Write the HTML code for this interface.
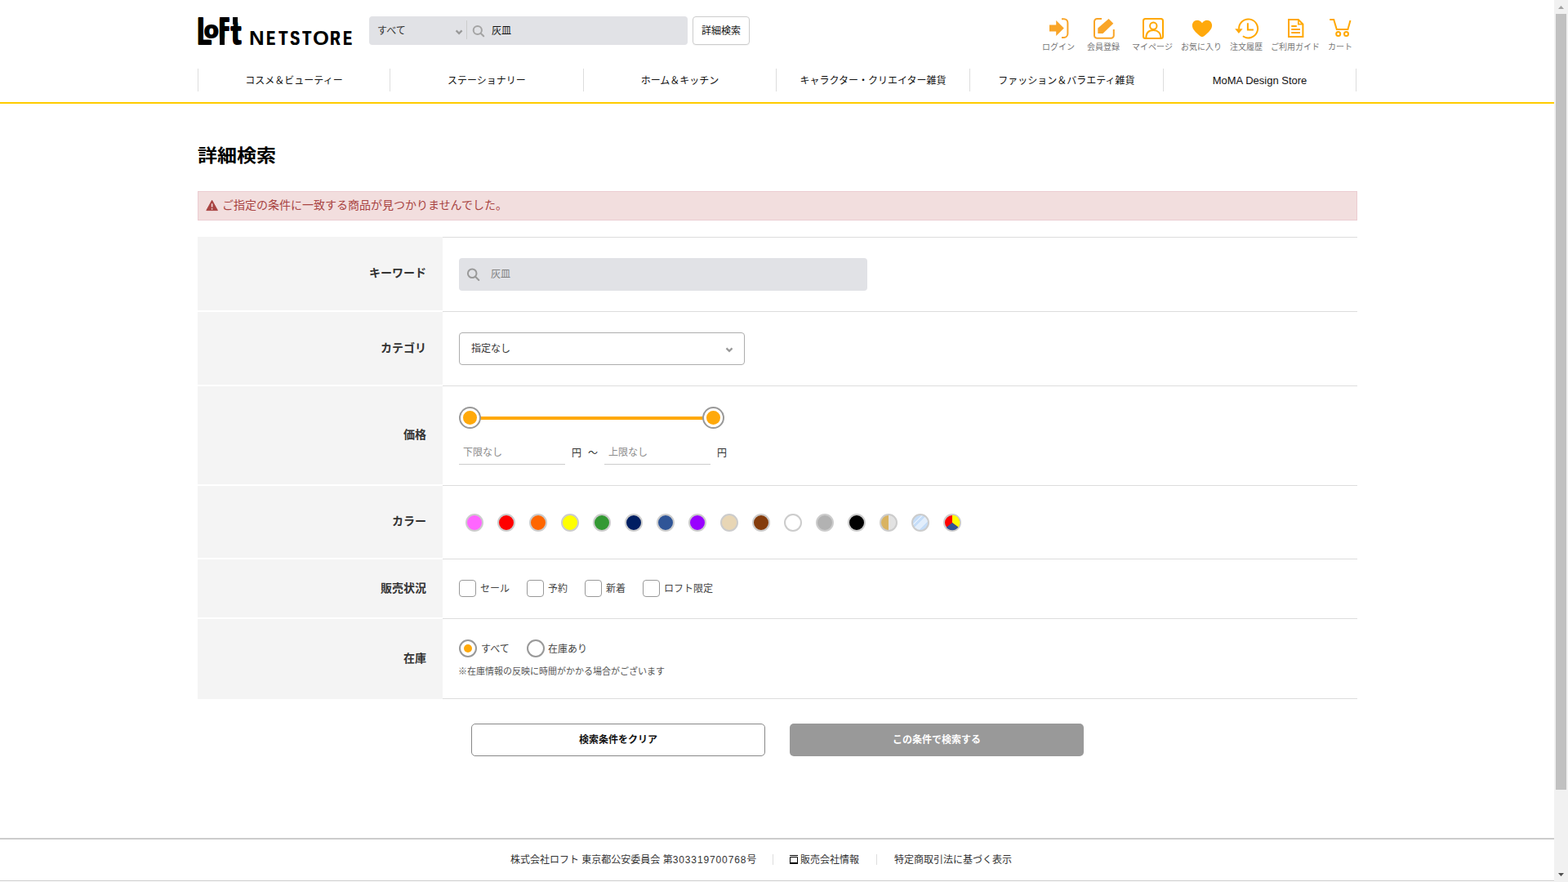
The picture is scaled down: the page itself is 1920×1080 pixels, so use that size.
<!DOCTYPE html>
<html lang="ja">
<head>
<meta charset="utf-8">
<title>詳細検索 | ロフトネットストア</title>
<style>
*{box-sizing:border-box;margin:0;padding:0}
html,body{width:1920px;height:1080px;overflow:hidden;background:#fff}
body{position:relative;font-family:"Liberation Sans","Noto Sans CJK JP",sans-serif;font-size:12px;color:#333;line-height:1}
.a{position:absolute;white-space:nowrap}
svg{position:absolute;overflow:visible}
/* header */
.logo{left:0;top:0;width:440px;height:60px;font-size:0;line-height:0}
.logo i{display:block}
.logo span{display:inline-block;position:relative;width:0;height:0;vertical-align:top;font-weight:bold;color:#000;transform-origin:0 0;line-height:1;white-space:nowrap}
.logo .ns{position:static;display:inline;font-size:0}
.logo .ns span{top:35px;font-size:24.5px}
.sbox{left:452px;top:20px;width:390px;height:35px;background:#e1e2e6;border-radius:4px}
.btn-d{left:848px;top:20px;width:70px;height:35px;border:1px solid #ccc;border-radius:4px;background:#fff;text-align:center;line-height:35px;color:#111;box-shadow:0 1px 1px rgba(0,0,0,.04)}
.ilab{font-size:10px;color:#777;text-align:center;width:80px;top:52px;line-height:11px}
.nd{top:84px;width:1px;height:28px;background:#ddd}
.ni{top:86px;height:28px;text-align:center;line-height:27px;font-size:12px;color:#111}
.yline{left:0;top:125px;width:1903px;height:2px;background:#ffcc00}
/* content */
h1{left:242px;top:177.6px;font-size:24px;font-weight:bold;color:#000;line-height:26px;transform:scaleY(.89);transform-origin:0 50%}
.alert{left:242px;top:234px;width:1420px;height:36px;background:#f2dede;border:1px solid #ebccd1;color:#a94442;font-size:14px;line-height:33px;padding-left:29px}
.th{left:242px;width:300px;background:#f4f4f4;text-align:right;padding-right:20px;font-size:14px;font-weight:bold;color:#333}
.ln{left:542px;width:1120px;height:1px;background:#ddd}
.kw{left:562px;top:316px;width:500px;height:40px;background:#e1e2e6;border-radius:4px;color:#808080;padding-left:39px;line-height:40px}
.sel{left:562px;top:407px;width:350px;height:40px;border:1px solid #adadad;border-radius:4px;background:#fff;padding-left:14px;line-height:38px;color:#333}
.track{left:575px;top:510px;width:298px;height:4px;background:#ffa90a}
.hd{width:27px;height:27px;border-radius:50%;border:2px solid #999;background:#fff;top:498px}
.hd i{position:absolute;left:3px;top:3px;width:17px;height:17px;border-radius:50%;background:#ffa90a}
.pin{top:538px;width:130px;height:31px;border-bottom:1px solid #ccc;color:#8c8c8c;padding-left:5px;line-height:32px}
.col{top:629px;width:22px;height:22px;border-radius:50%;border:2px solid #ccc;overflow:hidden}
.cb{top:710px;width:21px;height:21px;border:1px solid #999;border-radius:4px;background:#fff}
.cl{top:714px;line-height:14px;color:#444}
.rd{top:783px;width:22px;height:22px;border:2px solid #999;border-radius:50%;background:#fff}
.rd i{position:absolute;left:4px;top:4px;width:10px;height:10px;border-radius:50%;background:#ffa90a}
.rl{top:788px;line-height:14px;color:#444}
.note{left:561px;top:815px;font-size:11px;color:#555;line-height:14px}
.b1{left:577px;top:886px;width:360px;height:40px;border:1px solid #888;border-radius:5px;background:#fff;text-align:center;font-weight:bold;color:#111;line-height:39px}
.b2{left:967px;top:886px;width:360px;height:40px;border-radius:5px;background:#999;text-align:center;font-weight:bold;color:#fff;line-height:41px}
/* footer */
.f1{left:0;top:1026px;width:1903px;height:2px;background:#ccc}
.f2{left:0;top:1078px;width:1903px;height:1px;background:#ccc}
.ft{top:1046px;line-height:14px;color:#333}
.fs{top:1046px;width:1px;height:13px;background:#ddd}
/* scrollbar */
.sb{left:1903px;top:0;width:17px;height:1080px;background:#f1f1f1}
.sbt{left:1905px;top:17px;width:13px;height:950px;background:#c1c1c1}
</style>
</head>
<body>
<!-- HEADER -->
<div class="a logo" aria-label="LoFt NETSTORE"><i style="position:absolute;left:285px;top:21px;width:6px;height:9px;background:#000"></i><i style="position:absolute;left:269.2px;top:40px;width:5.8px;height:14.8px;background:#000"></i><span style="left:241.14px;top:13.5px;font-size:48px;transform:scaleX(.569);text-shadow:3.5px 0 0 #000,0 1px 0 #000,3.5px 1px 0 #000">L</span><span style="left:249.7px;top:23.2px;font-size:30px;transform:scale(.961,.93);-webkit-text-stroke:2px #000">o</span><span style="left:268.1px;top:16.3px;font-size:37px;transform:scale(.437,.95);text-shadow:4px 0 0 #000,8px 0 0 #000,0 1.3px 0 #000,4px 1.3px 0 #000,8px 1.3px 0 #000">F</span><span style="left:282.2px;top:19.5px;font-size:50px;transform:scale(.84,.79);text-shadow:0 1.27px 0 #000,0 2.53px 0 #000">t</span> <span class="ns"><span style="left:304.62px;transform:scaleX(1.054);">N</span><span style="left:326.08px;transform:scaleX(0.634);text-shadow:1.74px 0 0 #000;">E</span><span style="left:341.11px;transform:scaleX(0.704);text-shadow:1.56px 0 0 #000;">T</span><span style="left:354.70px;transform:scaleX(0.695);text-shadow:1.58px 0 0 #000;">S</span><span style="left:369.71px;transform:scaleX(0.699);text-shadow:1.57px 0 0 #000;">T</span><span style="left:382.71px;transform:scaleX(1.045);">O</span><span style="left:404.12px;transform:scaleX(0.680);text-shadow:1.62px 0 0 #000;">R</span><span style="left:420.07px;transform:scaleX(0.626);text-shadow:1.76px 0 0 #000;">E</span></span></div>
<div class="a sbox"></div>
<div class="a" style="left:462px;top:31px;line-height:14px;color:#333">すべて</div>
<div class="a" style="left:571px;top:25px;width:1px;height:23px;background:#ccc"></div>
<div class="a" style="left:602px;top:31px;line-height:14px;color:#111">灰皿</div>
<div class="a btn-d">詳細検索</div>

<div class="a ilab" style="left:1256px">ログイン</div>
<div class="a ilab" style="left:1311px">会員登録</div>
<div class="a ilab" style="left:1371px">マイページ</div>
<div class="a ilab" style="left:1431px">お気に入り</div>
<div class="a ilab" style="left:1486px">注文履歴</div>
<div class="a ilab" style="left:1546px">ご利用ガイド</div>
<div class="a ilab" style="left:1601px">カート</div>

<div class="a nd" style="left:242px"></div>
<div class="a nd" style="left:477px"></div>
<div class="a nd" style="left:714px"></div>
<div class="a nd" style="left:950px"></div>
<div class="a nd" style="left:1187px"></div>
<div class="a nd" style="left:1424px"></div>
<div class="a nd" style="left:1660px"></div>
<div class="a ni" style="left:243px;width:234px">コスメ＆ビューティー</div>
<div class="a ni" style="left:478px;width:236px">ステーショナリー</div>
<div class="a ni" style="left:715px;width:235px">ホーム＆キッチン</div>
<div class="a ni" style="left:951px;width:236px">キャラクター・クリエイター雑貨</div>
<div class="a ni" style="left:1188px;width:236px">ファッション＆バラエティ雑貨</div>
<div class="a ni" style="left:1425px;width:235px;font-size:13px;top:85px">MoMA Design Store</div>
<div class="a yline"></div>

<!-- CONTENT -->
<h1 class="a">詳細検索</h1>
<div class="a alert">ご指定の条件に一致する商品が見つかりませんでした。</div>

<div class="a th" style="top:290px;height:90px;line-height:88px">キーワード</div>
<div class="a th" style="top:382px;height:89px;line-height:88px">カテゴリ</div>
<div class="a th" style="top:473px;height:120px;line-height:119px">価格</div>
<div class="a th" style="top:595px;height:88px;line-height:87px">カラー</div>
<div class="a th" style="top:685px;height:71px;line-height:71px">販売状況</div>
<div class="a th" style="top:758px;height:98px;line-height:97px">在庫</div>
<div class="a ln" style="top:290px"></div>
<div class="a ln" style="top:381px"></div>
<div class="a ln" style="top:472px"></div>
<div class="a ln" style="top:594px"></div>
<div class="a ln" style="top:684px"></div>
<div class="a ln" style="top:757px"></div>
<div class="a ln" style="top:855px"></div>

<div class="a kw">灰皿</div>
<div class="a sel">指定なし</div>

<div class="a track"></div>
<div class="a hd" style="left:562px"><i></i></div>
<div class="a hd" style="left:860px"><i></i></div>
<div class="a pin" style="left:562px">下限なし</div>
<div class="a" style="left:700px;top:548px;line-height:14px">円</div>
<div class="a" style="left:720px;top:548px;line-height:14px">～</div>
<div class="a pin" style="left:740px">上限なし</div>
<div class="a" style="left:878px;top:548px;line-height:14px">円</div>

<div class="a col" style="left:570px;background:#ff66ff"></div>
<div class="a col" style="left:609px;background:#ff0000"></div>
<div class="a col" style="left:648px;background:#ff6600"></div>
<div class="a col" style="left:687px;background:#ffff00"></div>
<div class="a col" style="left:726px;background:#339933"></div>
<div class="a col" style="left:765px;background:#001e62"></div>
<div class="a col" style="left:804px;background:#2f5597"></div>
<div class="a col" style="left:843px;background:#9900ff"></div>
<div class="a col" style="left:882px;background:#e8d6b5"></div>
<div class="a col" style="left:921px;background:#843c0c"></div>
<div class="a col" style="left:960px;background:#ffffff"></div>
<div class="a col" style="left:999px;background:#b2b2b2"></div>
<div class="a col" style="left:1038px;background:#000000"></div>
<div class="a col" style="left:1077px;background:linear-gradient(90deg,#d9b361 50%,#e2e2e2 50%)"></div>
<div class="a col" style="left:1116px;background:linear-gradient(135deg,#c5ddf8 30.5%,#e2eefc 30.5%,#e2eefc 34%,#c5ddf8 34%,#c5ddf8 44.5%,#e2eefc 44.5%,#e2eefc 72%,#c5ddf8 72%)"></div>
<div class="a col" style="left:1155px;background:#ff0000"></div>

<div class="a cb" style="left:562px"></div><div class="a cl" style="left:588px">セール</div>
<div class="a cb" style="left:645px"></div><div class="a cl" style="left:671px">予約</div>
<div class="a cb" style="left:716px"></div><div class="a cl" style="left:742px">新着</div>
<div class="a cb" style="left:787px"></div><div class="a cl" style="left:813px">ロフト限定</div>

<div class="a rd" style="left:562px"><i></i></div><div class="a rl" style="left:589px">すべて</div>
<div class="a rd" style="left:645px"></div><div class="a rl" style="left:671px">在庫あり</div>
<div class="a note">※在庫情報の反映に時間がかかる場合がございます</div>

<div class="a b1">検索条件をクリア</div>
<div class="a b2">この条件で検索する</div>

<!-- FOOTER -->
<div class="a f1"></div>
<div class="a ft" style="left:625px">株式会社ロフト 東京都公安委員会 第<span style="letter-spacing:.88px">303319700768</span>号</div>
<div class="a fs" style="left:946px"></div>
<div class="a ft" style="left:980px">販売会社情報</div>
<div class="a fs" style="left:1073px"></div>
<div class="a ft" style="left:1095px">特定商取引法に基づく表示</div>
<div class="a f2"></div>

<!-- SCROLLBAR -->
<div class="a sb"></div>
<div class="a sbt"></div>
<!-- ICONS -->
<svg class="ov" width="1920" height="1080" viewBox="0 0 1920 1080" style="left:0;top:0;pointer-events:none" fill="none">
<!-- header select chevron + search -->
<path d="M558.6 37.4l3.5 3.5 3.5-3.5" stroke="#999" stroke-width="2.2"/>
<circle cx="584.8" cy="37" r="5.1" stroke="#a4a4a4" stroke-width="2"/>
<path d="M588.6 40.8l3.6 3.5" stroke="#a4a4a4" stroke-width="2.1" stroke-linecap="round"/>
<!-- login -->
<path d="M1285 30.4h8.2V24.9l9.6 9.6-9.6 9.6v-5.700h-8.2z" fill="#f9a528"/>
<path d="M1300 23.200h2.700a4.700 4.700 0 0 1 4.700 4.700v13.400a4.700 4.700 0 0 1-4.700 4.700H1300" stroke="#f9a528" stroke-width="2"/>
<!-- register -->
<path d="M1349 23h-5.600a3.400 3.400 0 0 0-3.400 3.400v17a3.400 3.400 0 0 0 3.400 3.400h17a3.400 3.400 0 0 0 3.400-3.400V36" stroke="#f9a528" stroke-width="2"/>
<path d="M1344.300 34.500l13.300-11.500 5.700 5.800-12.800 12.100h-6.200z" fill="#f9a528"/>
<g stroke="#ffa800" stroke-width="2">
<!-- mypage -->
<rect x="1400" y="23" width="24" height="24" rx="2.500"/>
<circle cx="1412.300" cy="31.700" r="4.200"/>
<path d="M1403.300 46.800C1403.300 40.200 1407 37 1412.300 37S1421.400 40.200 1421.400 46.800"/>
<!-- history -->
<path d="M1517.100 35.400A11.500 11.500 0 1 1 1521.900 44.300"/>
<path d="M1527.900 28.200v8.200h7"/>
<!-- guide -->
<path d="M1578 24h11.800l5.600 5.600V45H1578z"/>
<path d="M1589.800 24v5.600h5.600" stroke-width="1.600"/>
<path d="M1581.300 32h6.500M1581.300 36h10.700M1581.300 40.100h10.700"/>
<!-- cart -->
<path d="M1628.200 24h5l3.600 12h13.600l3.100-10.900"/>
<circle cx="1638.700" cy="41.600" r="2.500"/>
<circle cx="1648.500" cy="41.600" r="2.500"/>
</g>
<g fill="#ffa90c">
<path d="M1472 28.200C1470.600 26.100 1468.400 24.800 1466 24.800 1462.600 24.800 1459.900 27.600 1459.900 31.200 1459.900 35.600 1463.900 39.300 1469.600 44.300 1470.900 45.400 1473.100 45.400 1474.400 44.300 1480.100 39.300 1484.100 35.600 1484.100 31.200 1484.100 27.600 1481.400 24.800 1478 24.800 1475.600 24.800 1473.400 26.100 1472 28.200z"/>
<path d="M1512.200 35.300h9.400l-4.700 5.600z"/>
</g>
<!-- alert icon -->
<path d="M259.600 245.300l6.800 12.300h-13.600z" fill="#a94442" stroke="#a94442" stroke-width="1" stroke-linejoin="round"/>
<path d="M259.600 249.300v4.300" stroke="#f2dede" stroke-width="1.600"/>
<circle cx="259.600" cy="255.800" r="0.900" fill="#f2dede"/>
<!-- keyword search icon -->
<circle cx="578.2" cy="334.7" r="5.3" stroke="#999" stroke-width="2"/>
<path d="M582.100 338.700l4.200 4.300" stroke="#999" stroke-width="2" stroke-linecap="round"/>
<!-- select chevron -->
<path d="M889.5 426.4l3.5 3.5 3.5-3.5" stroke="#999" stroke-width="2.2"/>
<!-- footer window icon -->
<path d="M967 1047.5h10M967.5 1049.5h9v8h-9z" stroke="#000" stroke-width="1"/>
<path d="M967 1057h10" stroke="#000" stroke-width="2"/>
<!-- multi colour pie -->
<path d="M1166 640V630.8A9.2 9.2 0 0 1 1173.35 645.54z" fill="#ffff00"/>
<path d="M1166 640L1173.35 645.54A9.2 9.2 0 0 1 1158.85 645.79z" fill="#2f5597"/>
<!-- scrollbar arrows -->
<path d="M1908 11l3.500-4 3.500 4z" fill="#a3a3a3"/>
<path d="M1908 1069l3.500 4 3.500-4z" fill="#505050"/>
</svg>
</body>
</html>
